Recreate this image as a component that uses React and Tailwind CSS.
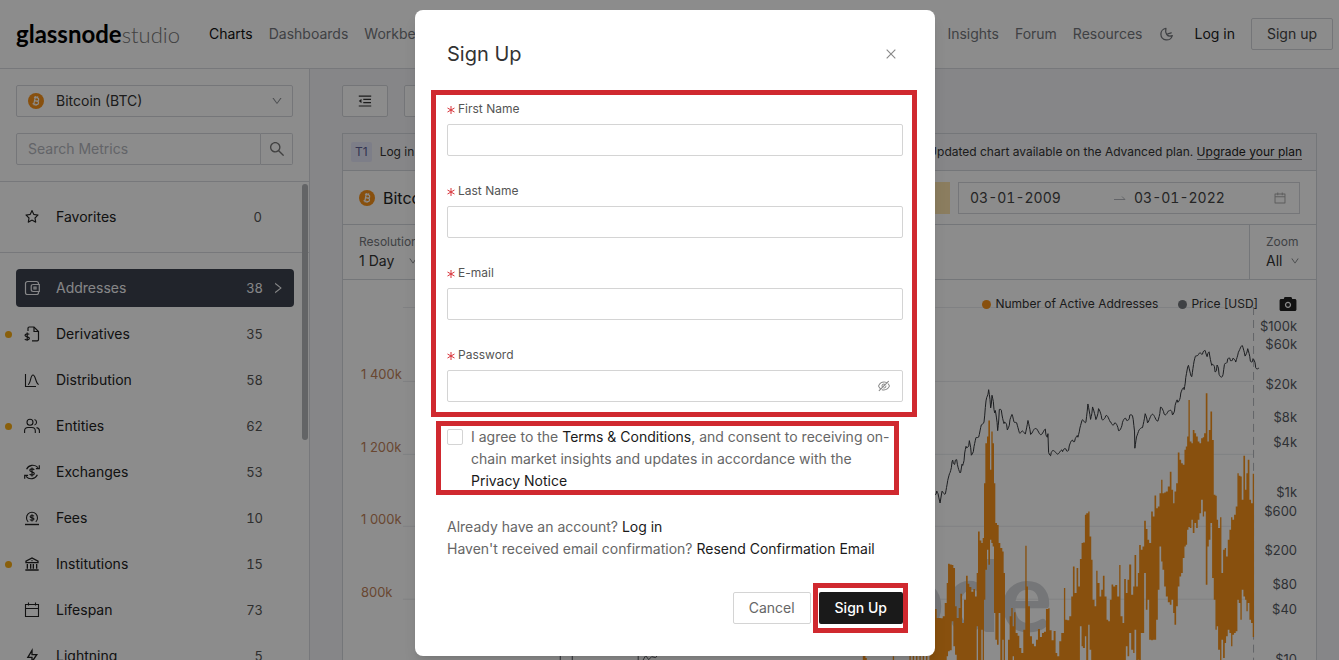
import React from "react";
import {
  AiOutlineSearch,
  AiOutlineMenuFold,
  AiOutlineDown,
  AiOutlineRight,
  AiOutlineEyeInvisible,
  AiFillCamera,
  AiOutlineCalendar,
  AiOutlineClose,
  AiOutlineStar,
} from "react-icons/ai";
import { RiBankLine, RiFlashlightLine } from "react-icons/ri";

function MoonIcon() {
  return (
    <svg viewBox="0 0 16 16" className="size-4" fill="none" stroke="currentColor" strokeWidth="1.300" strokeLinejoin="round">
      <path d="M7.500 2.400A5.800 5.800 0 1 0 13.900 9.600C11.800 10.400 9.500 10 8.400 8.500 7.300 7 7 4.500 7.500 2.400Z" transform="translate(.4 0)" />
      <path d="M9.800 7.800 13.200 6.800" strokeLinecap="round" />
    </svg>
  );
}

function WalletIcon() {
  return (
    <svg viewBox="0 0 16 16" className="size-4" fill="none" stroke="currentColor" strokeWidth="1.200">
      <path d="M14.500 4.500V3.600c0-1.200-.9-2.100-2.100-2.100H3.600c-1.200 0-2.100.9-2.100 2.100v8.800c0 1.200.9 2.100 2.100 2.100h8.800c1.200 0 2.100-.9 2.100-2.100v-.9" />
      <path d="M15.300 4.500H9.200C8 4.500 7.200 5.300 7.200 6.400v3.200c0 1.100.8 1.900 2 1.900h6.100z" />
      <path d="M10 7h2v2h-2z" />
    </svg>
  );
}

function DerivativesIcon() {
  return (
    <svg viewBox="0 0 16 16" className="size-4" fill="none" stroke="currentColor" strokeWidth="1.200">
      <path d="M4 5V2.200C4 1.500 4.500 1 5.200 1H10l4.500 4.500v8c0 .8-.5 1.300-1.300 1.300H8" />
      <path d="M10 1v4.500h4.500" />
      <path d="M5.300 8.300C4.800 7.600 1 7.300 1 9.300s4.400 1 4.400 3-3.700 1.700-4.600.8M3.200 6.600v8.200" />
    </svg>
  );
}

function DistributionIcon() {
  return (
    <svg viewBox="0 0 16 16" className="size-4" fill="none" stroke="currentColor" strokeWidth="1.100">
      <path d="M1.500 2v12.500H12" />
      <path d="M4 12.500C6.800 12 6.300 3 9 3s2.500 8.500 5.700 9.500" />
    </svg>
  );
}

function EntitiesIcon() {
  return (
    <svg viewBox="0 0 16 16" className="size-4" fill="none" stroke="currentColor" strokeWidth="1.100">
      <circle cx="6" cy="4.200" r="3" />
      <path d="M.6 15v-2.200c0-2 1.500-3.300 3.400-3.300h3.900c1.900 0 3.400 1.300 3.400 3.300V15" />
      <path d="M10.500 1.400a3 3 0 0 1 0 5.700M12.500 9.600c1.800.3 2.900 1.500 2.900 3.200V15" />
    </svg>
  );
}

function ExchangesIcon() {
  return (
    <svg viewBox="0 0 16 16" className="size-4" fill="none" stroke="currentColor" strokeWidth="1.200">
      <path d="M2.600 5.200C4.500 1 10.500-.3 14 3.700M15.300 1.300v3.400h-3.400" />
      <path d="M13.400 10.800C11.500 15 5.500 16.300 2 12.300M.7 14.700v-3.400h3.400" />
      <path d="M10.200 6C9.500 4.600 5.800 4.500 5.800 6.300S10.300 7.500 10.300 9.500s-4 2-4.600.5M8 3.500v9" />
    </svg>
  );
}

function FeesIcon() {
  return (
    <svg viewBox="0 0 16 16" className="size-4" fill="none" stroke="currentColor" strokeWidth="1.100">
      <path d="M4.200 11.800a5.500 5.500 0 1 1 7.600 0" />
      <path d="M1 14.500h14" strokeWidth="1.400" />
      <path d="M10 6.300C9.500 5.200 6.100 5 6.100 6.700S10 7.300 10 9s-3.500 1.700-4 .4M8 4.200v7.400" />
    </svg>
  );
}

function LifespanIcon() {
  return (
    <svg viewBox="0 0 16 16" className="size-4" fill="none" stroke="currentColor" strokeWidth="1.100">
      <path d="M1.500 2.500h13v12h-13zM1.500 6.500h13M4.500.5v3M11.500.5v3" />
    </svg>
  );
}

function BitcoinIcon() {
  return (
    <svg viewBox="0 0 16 16" className="size-4 shrink-0" aria-hidden="true">
      <circle cx="8" cy="8" r="8" fill="#f7931a" />
      <g fill="none" stroke="#fff" strokeWidth="1.200" transform="rotate(12 8 8)">
        <path d="M5.200 4.700h3.600a1.600 1.600 0 0 1 0 3.200H6.400h2.800a1.700 1.700 0 0 1 0 3.400h-4M6.500 4.700v6.600M7 3.200v1.500M8.800 3.200v1.500M7 11.300v1.500M8.800 11.300v1.500" />
      </g>
    </svg>
  );
}

const categories = [
  { name: "Addresses", count: 38, Icon: WalletIcon, active: true },
  { name: "Derivatives", count: 35, Icon: DerivativesIcon, dot: true },
  { name: "Distribution", count: 58, Icon: DistributionIcon },
  { name: "Entities", count: 62, Icon: EntitiesIcon, dot: true },
  { name: "Exchanges", count: 53, Icon: ExchangesIcon },
  { name: "Fees", count: 10, Icon: FeesIcon },
  { name: "Institutions", count: 15, Icon: RiBankLine, dot: true },
  { name: "Lifespan", count: 73, Icon: LifespanIcon },
  { name: "Lightning", count: 5, Icon: RiFlashlightLine },
];

// [x, top, bottom] of each stretch of the active-address series.
const bars = [
  [-200, 610, 720], [-192, 655, 720], [-110, 650, 720], [-60, 640, 720], [-50, 600, 720], [-40, 620, 720], [-30, 560, 720], [-20, 600, 720], [-10, 540, 720], [0, 560, 720], [8, 530, 720],
  [16, 508, 720], [22, 535, 720], [28, 535, 720], [34, 536, 720], [40, 530, 720], [46, 490, 720], [52, 430, 650], [56, 372, 635],
  [61, 374, 632], [67, 376, 545], [72, 385, 620], [77, 500, 645], [82, 535, 720], [88, 505, 720], [93, 462, 720], [98, 550, 720],
  [104, 480, 720], [110, 408, 720], [115, 432, 720], [120, 442, 720], [126, 456, 720], [132, 448, 720], [137, 470, 720], [142, 400, 560],
  [146, 275, 720], [151, 302, 720], [156, 310, 570], [160, 295, 720], [164, 130, 480], [168, 10, 390], [173, -10, 330], [177, -58, 375],
  [182, 90, 300], [186, -25, 310], [190, 10, 320], [194, 130, 520], [198, 250, 600], [203, 256, 615], [208, 310, 520], [213, 325, 720],
  [219, 335, 600], [223, 400, 720], [236, 600, 720], [241, 530, 720], [246, 505, 720], [250, 560, 650], [254, 518, 720], [259, 580, 720],
  [265, 588, 720], [270, 625, 720], [276, 640, 720], [282, 570, 720], [288, 318, 720], [292, 440, 720], [296, 500, 720], [302, 590, 720],
  [308, 612, 720], [314, 620, 720], [320, 600, 720], [326, 568, 720], [332, 592, 720], [338, 580, 720], [344, 576, 720], [350, 508, 720],
  [357, 506, 720], [361, 572, 720], [367, 602, 720], [373, 574, 720], [379, 640, 720], [384, 650, 720], [390, 605, 720], [396, 580, 720],
  [404, 445, 720], [408, 540, 720], [414, 542, 720], [420, 530, 720], [426, 470, 720], [431, 380, 720], [436, 460, 720], [442, 385, 720],
  [447, 440, 720], [452, 358, 560], [457, 310, 620], [461, 308, 625], [467, 225, 590], [471, 220, 720], [477, 215, 555], [481, 290, 630],
  [486, 360, 720], [490, 480, 720], [496, 500, 720], [501, 393, 720], [505, 430, 720], [511, 470, 720], [516, 450, 720], [521, 408, 720],
  [526, 470, 720], [532, 540, 720], [537, 545, 720], [542, 480, 720], [547, 434, 720], [552, 440, 720], [558, 436, 720], [564, 470, 720],
  [570, 376, 720], [574, 530, 720], [580, 550, 720], [585, 418, 720], [590, 460, 620], [595, 420, 650], [600, 374, 580], [606, 465, 630],
  [612, 440, 640], [616, 346, 570], [621, 440, 720], [626, 400, 660], [630, 316, 700], [635, 330, 580], [640, 320, 580], [645, 243, 400],
  [650, 268, 510], [655, 300, 480], [660, 310, 600], [666, 215, 602], [671, 230, 600], [676, 167, 600], [681, 205, 540], [686, 200, 450],
  [691, 160, 320], [696, 120, 365], [700, 160, 390], [705, 158, 440], [710, 155, 470], [716, 140, 488], [722, 96, 495], [727, 150, 480],
  [732, 190, 520], [736, 155, 555], [741, 130, 500], [746, 38, 440], [751, 60, 410], [756, 70, 400], [761, 75, 355], [766, 30, 320],
  [770, 20, 315], [774, -10, 270], [778, -120, 262], [782, 5, 265], [787, 10, 240], [791, -30, 280], [796, -20, 250], [801, -10, 265],
  [806, 5, 240], [811, 10, 220], [816, -5, 180], [821, -8, 230], [825, -20, 215], [830, -140, 435], [835, 5, 320], [839, -30, 300],
  [844, -85, 250], [849, 0, 415], [854, 165, 480], [859, 168, 570], [863, 240, 560], [867, 265, 630], [873, 232, 720], [877, 400, 600],
  [882, 330, 655], [887, 325, 610], [891, 350, 590], [896, 300, 570], [901, 270, 580], [906, 232, 620], [910, 240, 585], [915, 225, 580],
  [920, 200, 575], [925, 100, 480], [929, 108, 490], [934, 110, 540], [938, 180, 450], [943, 48, 470], [948, 150, 480], [952, 100, 515],
  [956, 60, 490], [961, 180, 540], [966, 190, 550], [971, 102, 592],
];

// Points of the price line.
const price = [
  [16, 825], [22, 812], [28, 835], [32, 845], [38, 820], [48, 815], [55, 790], [62, 750], [68, 735], [72, 722], [78, 730], [84, 725],
  [94, 765], [100, 730], [106, 705], [112, 680], [120, 665], [126, 705], [134, 680], [142, 655], [150, 640], [156, 620], [164, 600],
  [168, 570], [172, 525], [178, 518], [184, 555], [188, 535], [194, 560], [198, 580], [205, 625], [210, 575], [218, 580], [226, 610],
  [234, 628], [242, 600], [250, 590], [256, 605], [264, 620], [272, 635], [280, 640], [288, 635], [296, 610], [304, 635], [320, 635],
  [350, 636], [356, 650], [358, 690], [366, 705], [380, 692], [400, 700], [412, 690], [420, 680], [432, 665], [438, 655], [446, 655],
  [452, 620], [460, 605], [470, 600], [476, 560], [484, 590], [490, 570], [500, 590], [508, 575], [518, 590], [530, 595], [545, 600],
  [556, 615], [568, 628], [580, 610], [592, 600], [602, 585], [612, 600], [616, 630], [617, 690], [622, 645], [632, 635], [640, 615],
  [648, 590], [655, 600], [670, 592], [686, 595], [694, 570], [705, 575], [720, 580], [730, 580], [738, 560], [746, 545], [755, 520],
  [765, 510], [770, 470], [778, 440], [788, 465], [795, 430], [800, 400], [808, 412], [815, 392], [822, 405], [830, 390], [836, 410],
  [842, 400], [850, 440], [858, 450], [864, 440], [870, 460], [882, 465], [888, 430], [896, 415], [904, 425], [912, 410], [920, 432],
  [928, 390], [940, 385], [948, 400], [956, 395], [964, 415], [972, 425], [980, 435], [990, 445],
];

function barPath() {
  return bars
    .map(([x, top, bottom], i) => {
      const next = i + 1 < bars.length ? bars[i + 1][0] : x + 4;
      const end = next - x > 8 ? x + 4 : next;
      return `M${x} ${top}H${end}V${bottom}H${x}Z`;
    })
    .join("");
}

function pricePath() {
  const pts = [];
  for (let i = 0; i < price.length - 1; i++) {
    const [x0, y0] = price[i];
    const [x1, y1] = price[i + 1];
    const n = Math.max(1, Math.round((x1 - x0) / 2));
    for (let k = 0; k < n; k++) {
      const t = k / n;
      const wobble = Math.sin((i * 7 + k) * 12.9898) * 9;
      pts.push(`${(x0 + (x1 - x0) * t).toFixed(1)} ${(y0 + (y1 - y0) * t + wobble).toFixed(1)}`);
    }
  }
  pts.push("990 445");
  return "M" + pts.join("L");
}

const leftAxis = [["1 400k", 379], ["1 200k", 452], ["1 000k", 524], ["800k", 597]];
const rightAxis = [
  ["$100k", 331], ["$60k", 349], ["$20k", 389], ["$8k", 422], ["$4k", 447], ["$1k", 497],
  ["$600", 516], ["$200", 555], ["$80", 589], ["$40", 614], ["$10", 664],
];

function Chart() {
  return (
    <svg viewBox="343 320 974 360" className="w-full overflow-visible" role="img" aria-label="Number of Active Addresses and Price">
      <g stroke="#e9ebee" strokeWidth="1">
        {[307.5, 381.5, 454.5, 526.5, 599.5].map((y) => (
          <path key={y} d={`M403 ${y}H1254`} />
        ))}
      </g>
      <text x="1053" y="632" textAnchor="end" fontSize="98" fontWeight="700" fill="#d6d8db" fontFamily="Lato, sans-serif">
        glassnode
      </text>
      <path d="M1254.500 307V680" stroke="#b4b7bd" strokeDasharray="8 5" />
      <g transform="translate(930 440) scale(.33333)">
        <path d={barPath()} fill="#f7931a" />
      </g>
      <g transform="translate(930 220) scale(.33333)">
        <path d={pricePath()} fill="none" stroke="#33363b" strokeWidth="3" />
      </g>
      <g stroke="#55585e" fill="none">
        <path d="M560.500 655v10M572.500 655v10M638.500 655v10M643 661l3-5 3 4 3-3 4 1 3-4" />
      </g>
      <g fontSize="13" fontFamily="Inter, sans-serif">
        {leftAxis.map(([t, y]) => (
          <text key={t} x="361" y={y} fill="#c08259">{t}</text>
        ))}
        {rightAxis.map(([t, y]) => (
          <text key={t} x="1298" y={y} fill="#55595f" textAnchor="end">{t}</text>
        ))}
      </g>
    </svg>
  );
}

function Header() {
  return (
    <header className="flex h-[69px] shrink-0 items-center justify-between border-b border-[#d9dbe0] bg-white pl-4 pr-[6px]">
      <div className="flex items-center gap-8">
        <a href="#home" className="flex w-[161px] items-baseline font-[Lato,sans-serif] leading-8 text-black">
          <span className="text-2xl font-bold leading-8">glassnode</span>
          <span className="text-[22px] font-light text-[#777]">studio</span>
        </a>
        <nav className="flex items-center gap-4 text-[#74777c]">
          <a href="#charts" className="text-[#111]">Charts</a>
          <a href="#dashboards">Dashboards</a>
          <a href="#workbench">Workbench</a>
        </nav>
      </div>
      <div className="flex items-center gap-4 text-[#74777c]">
        <a href="#insights">Insights</a>
        <a href="#forum">Forum</a>
        <a href="#resources">Resources</a>
        <button type="button" aria-label="Dark mode" className="mr-1">
          <MoonIcon />
        </button>
        <a href="#login" className="text-[#222]">Log in</a>
        <button type="button" className="h-8 rounded-xs border border-[#d4d6da] px-[15px] text-[#444]">Sign up</button>
      </div>
    </header>
  );
}

function Sidebar() {
  return (
    <aside className="flex w-[310px] shrink-0 flex-col border-r border-[#d9dbe0] bg-white">
      <div className="flex flex-col gap-4 border-b border-[#d9dbe0] px-4 pb-4 pt-4">
        <div className="relative flex items-center">
          <select aria-label="Asset" className="h-8 w-full appearance-none rounded-xs border border-[#d6d8dd] bg-white pl-[39px] text-[#333]">
            <option>Bitcoin (BTC)</option>
          </select>
          <span className="pointer-events-none absolute left-3"><BitcoinIcon /></span>
          <AiOutlineDown className="pointer-events-none absolute right-[10px] size-3 text-[#8a8d92]" />
        </div>
        <form className="flex h-8">
          <input aria-label="Search Metrics" placeholder="Search Metrics" className="min-w-0 flex-1 rounded-l-xs border border-[#d6d8dd] pl-[11px] placeholder:text-[#b4b7bd]" />
          <button type="button" aria-label="Search" className="flex w-8 items-center justify-center rounded-r-xs border border-l-0 border-[#d6d8dd] text-[#777]">
            <AiOutlineSearch className="size-[18px]" />
          </button>
        </form>
      </div>
      <div className="relative min-h-0 flex-1 overflow-hidden">
        <div className="border-b border-[#d9dbe0] px-4 py-4">
          <button type="button" className="flex h-[38px] w-full items-center gap-4 pl-2 text-left text-[#222]">
            <AiOutlineStar className="size-4" />
            <span className="flex-1">Favorites</span>
            <span className="pr-[31px] text-[13px] tabular-nums text-[#555]">0</span>
          </button>
        </div>
        <nav className="flex flex-col gap-2 py-4 pl-4 pr-[15px]">
          {categories.map(({ name, count, Icon, active, dot }) => (
            <a
              key={name}
              href={"#" + name}
              className={
                "relative flex h-[38px] shrink-0 items-center gap-4 rounded pl-2 " +
                (active ? "bg-[#3d424f] text-[#f4f5f7]" : "text-[#222]")
              }
            >
              {dot && <span className="absolute -left-[11px] size-[7px] rounded-full bg-[#faad14]" />}
              <Icon className="size-4" />
              <span className="flex-1">{name}</span>
              <span className={"flex items-center gap-2 pr-[9px] text-[13px] tabular-nums " + (active ? "" : "text-[#555]")}>
                {count}
                <AiOutlineRight className={"size-[14px] " + (active ? "" : "invisible")} />
              </span>
            </a>
          ))}
        </nav>
        <div className="absolute right-px top-[2px] h-64 w-[6px] rounded-full bg-[#b4b6ba]" />
      </div>
    </aside>
  );
}

function Main() {
  return (
    <main className="flex min-w-0 flex-1 flex-col gap-4 bg-[#f4f5f8] pl-8 pr-[22px] pt-4">
      <div className="flex gap-4">
        <button type="button" aria-label="Collapse menu" className="flex h-8 w-[46px] items-center justify-center rounded-xs border border-[#d4d6da] bg-white text-[#333]">
          <AiOutlineMenuFold className="size-4" />
        </button>
        <button type="button" className="h-8 w-40 rounded-xs border border-[#d4d6da] bg-white text-[#333]" aria-label="Add to dashboard" />
      </div>
      <section className="flex flex-col border border-[#d4d7dd] bg-white">
        <div className="flex h-[37px] items-center justify-between border-b border-[#d4d7dd] bg-[#f4f5f8] pl-2 pr-[14px] text-xs text-[#333]">
          <span className="flex items-center gap-2">
            <span className="rounded-xs bg-[#e4e5f7] px-1 py-[2px] text-[#5b5d94]">T1</span>
            Log in
          </span>
          <span>
            Updated chart available on the Advanced plan.{" "}
            <a href="#upgrade" className="border-b border-[#777] text-[#222]">Upgrade your plan</a>
          </span>
        </div>
        <div className="flex h-[54px] items-center justify-between border-b border-[#d4d7dd] px-4">
          <h1 className="flex items-center gap-2 text-base text-[#222]">
            <BitcoinIcon />
            Bitcoin
          </h1>
          <div className="flex gap-2">
            <span className="h-8 w-20 bg-[#fde4ae]" />
            <div className="flex h-8 w-[342px] items-center border border-[#d6d8dd] pl-[11px] pr-3 tabular-nums text-[#444]">
              <input aria-label="Start date" defaultValue="03-01-2009" className="w-[144px]" />
              <svg viewBox="0 0 12 8" className="mr-2 w-3 shrink-0" fill="none" stroke="#b4b7bd"><path d="M0 5.500h11L8 2.500" /></svg>
              <input aria-label="End date" defaultValue="03-01-2022" className="min-w-0 flex-1" />
              <AiOutlineCalendar className="size-[14px] text-[#aaa]" />
            </div>
          </div>
        </div>
        <div className="flex h-[55px] justify-between border-b border-[#d4d7dd]">
          <label className="flex flex-col justify-center px-4 text-xs text-[#74777c]">
            Resolution
            <span className="relative flex items-center pt-px">
              <select className="w-14 appearance-none text-sm text-[#333]"><option>1 Day</option></select>
              <AiOutlineDown className="pointer-events-none absolute right-0 size-[10px]" />
            </span>
          </label>
          <label className="flex flex-col justify-center border-l border-[#d4d7dd] px-4 text-xs text-[#74777c]">
            Zoom
            <span className="relative flex items-center pt-px">
              <select className="w-[34px] appearance-none text-sm text-[#333]"><option>All</option></select>
              <AiOutlineDown className="pointer-events-none absolute right-0 size-[10px]" />
            </span>
          </label>
        </div>
        <div className="relative z-10 flex h-10 items-center justify-end gap-5 pr-[18px] pt-2 text-xs text-[#333]">
          <span className="flex items-center gap-1"><i className="size-[9px] rounded-full bg-[#f7931a]" />Number of Active Addresses</span>
          <span className="flex items-center gap-1"><i className="size-[9px] rounded-full bg-[#74777c]" />Price [USD]</span>
          <button type="button" aria-label="Save image" className="text-[#222]"><AiFillCamera className="size-5" /></button>
        </div>
        <Chart />
      </section>
    </main>
  );
}

const fields = [
  { id: "first", label: "First Name", type: "text" },
  { id: "last", label: "Last Name", type: "text" },
  { id: "email", label: "E-mail", type: "email" },
  { id: "password", label: "Password", type: "password" },
];

function SignUpDialog() {
  return (
    <div role="dialog" aria-modal="true" aria-labelledby="signup-title" className="relative w-[520px] rounded-lg bg-white px-8 pb-8 pt-[30px] text-[#666] shadow-lg">
      <div className="flex h-7 items-center justify-between pr-[5px]">
        <h2 id="signup-title" className="text-xl text-[#333]">Sign Up</h2>
        <button type="button" aria-label="Close" className="text-[#888]"><AiOutlineClose className="size-[14px]" /></button>
      </div>
      <form className="pt-8">
        <div className="flex flex-col gap-[26px]">
          {fields.map(({ id, label, type }) => (
            <div key={id} className="flex flex-col gap-[6px]">
              <label htmlFor={id} className="flex items-center gap-[3px] text-xs leading-[18px] text-[#555]">
                <svg viewBox="0 0 8 8" className="mt-px size-2" stroke="#d8343b" aria-hidden="true">
                  <path d="M4 0v8M.5 2l7 4M7.500 2l-7 4" />
                </svg>
                {label}
              </label>
              <div className="relative flex items-center">
                <input id={id} type={type} className="h-8 w-full rounded-xs border border-[#d4d4d4] bg-white px-3" />
                {type === "password" && (
                  <button type="button" aria-label="Show password" className="absolute right-3 text-[#888]">
                    <AiOutlineEyeInvisible className="size-[14px]" />
                  </button>
                )}
              </div>
            </div>
          ))}
        </div>
        <label className="flex items-start gap-2 pt-6 leading-[22px]">
          <input type="checkbox" className="mt-[3px] size-4 shrink-0 appearance-none rounded-xs border border-[#d4d4d4]" />
          <span>
            I agree to the <a href="#terms" className="text-[#1a1a1a]">Terms &amp; Conditions</a>, and consent to receiving on-chain market insights and updates in accordance with the{" "}
            <a href="#privacy" className="text-[#1a1a1a]">Privacy Notice</a>
          </span>
        </label>
        <div className="pt-6 leading-[22px]">
          <p>Already have an account? <a href="#login" className="text-[#1a1a1a]">Log in</a></p>
          <p>Haven't received email confirmation? <a href="#resend" className="text-[#1a1a1a]">Resend Confirmation Email</a></p>
        </div>
        <div className="flex justify-end gap-2 pt-8">
          <button type="button" className="h-8 rounded-xs border border-[#d4d4d4] px-[15px]">Cancel</button>
          <button type="button" className="h-8 rounded-xs bg-[#1a1a1a] px-4 font-medium text-white">Sign Up</button>
        </div>
      </form>
      <div className="pointer-events-none absolute left-4 top-20 h-[327px] w-[486px] border-[5px] border-[#d0292f]" />
      <div className="pointer-events-none absolute left-[21px] top-[411px] h-[74px] w-[463px] border-[5px] border-[#d0292f]" />
      <div className="pointer-events-none absolute left-[398px] top-[573px] h-[50px] w-[95px] border-[5px] border-[#d0292f]" />
    </div>
  );
}

export default function App() {
  return (
    <div className="relative flex h-screen flex-col overflow-hidden bg-white font-[Inter,sans-serif] text-sm">
      <Header />
      <div className="flex min-h-0 flex-1">
        <Sidebar />
        <Main />
      </div>
      <div className="absolute inset-0 z-20 flex items-start justify-center bg-black/45 pl-[11px] pt-[10px]">
        <SignUpDialog />
      </div>
    </div>
  );
}
